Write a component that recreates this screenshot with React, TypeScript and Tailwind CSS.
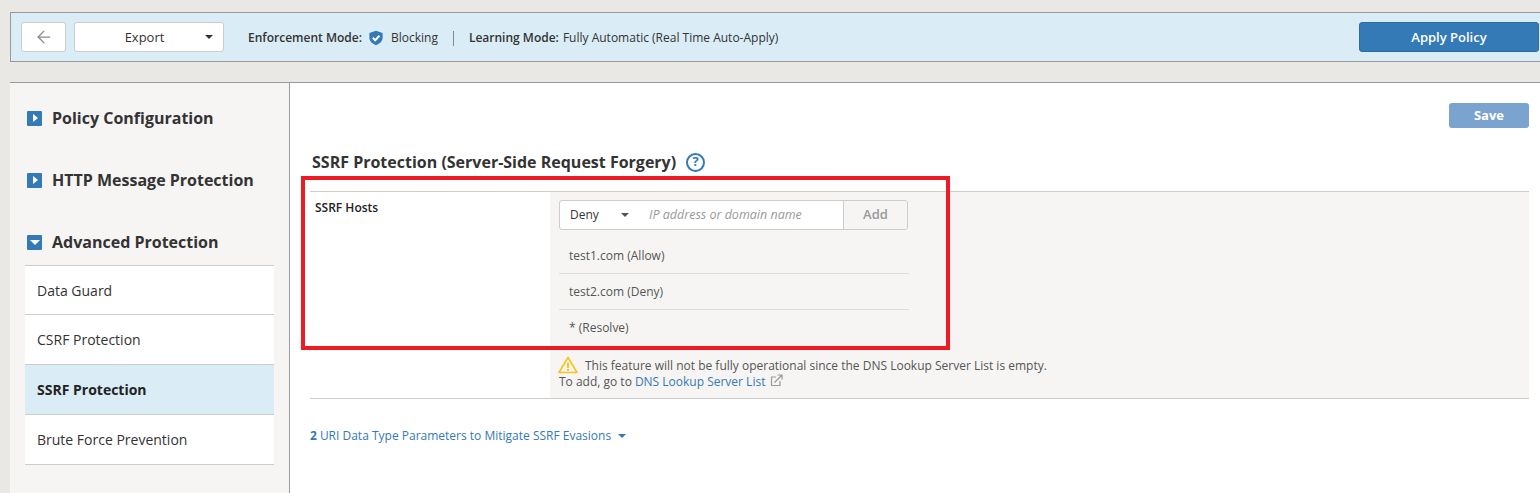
import { ArrowLeft } from "lucide-react";

function Caret({ className }: { className: string }) {
  return <span className={`inline-block w-0 h-0 border-x-[4px] border-x-transparent border-t-[4px] ${className}`} />;
}

function SectionHeader({ title, open, className }: { title: string; open?: boolean; className?: string }) {
  return (
    <div className={`flex items-center h-[20px] pl-[17px] ${className ?? ""}`}>
      <span className="w-[15px] h-[15px] bg-[#337ab7] rounded-[1px] flex items-center justify-center shrink-0">
        {open ? (
          <span className="w-0 h-0 border-x-[5px] border-x-transparent border-t-[5px] border-t-white" />
        ) : (
          <span className="w-0 h-0 border-y-[4px] border-y-transparent border-l-[5px] border-l-white ml-[1px]" />
        )}
      </span>
      <span className="ml-[10px] text-[16px] font-bold text-[#333]">{title}</span>
    </div>
  );
}

const menu = ["Data Guard", "CSRF Protection", "SSRF Protection", "Brute Force Prevention"];
const hosts = ["test1.com (Allow)", "test2.com (Deny)", "* (Resolve)"];

export default function App() {
  return (
    <div className="h-[493px] overflow-hidden bg-[#e9e8e4] pt-[12px] pl-[10px] text-[#333] font-['Open_Sans',sans-serif] relative">
      <div className="h-[50px] bg-[#daecf6] border border-r-0 border-[#999] flex items-center pl-[10px]">
        <button className="w-[45px] h-[30px] bg-white border border-[#ccc] rounded-[3px] flex items-center justify-center">
          <ArrowLeft className="w-[20px] h-[20px] text-[#8a8a8a]" strokeWidth={1.5} />
        </button>
        <button className="ml-[8px] w-[150px] h-[30px] pt-[2px] bg-white border border-[#ccc] rounded-[3px] relative text-[13px] flex items-center justify-center">
          <span className="mr-[9px]">Export</span>
          <Caret className="absolute right-[10px] top-[12px] border-t-[#333]" />
        </button>
        <span className="ml-[24px] mt-[2px] text-[12px] font-semibold">Enforcement Mode:</span>
        <svg viewBox="0 0 16 16" className="w-[16px] h-[16px] ml-[6px] mt-[2px]">
          <path d="M8 .8 14.6 3v4.6c0 3.6-2.6 6.2-6.6 7.6-4-1.4-6.6-4-6.6-7.6V3z" fill="#337ab7" />
          <path d="M4.8 7.8 7.2 10.2 11.4 5.8" fill="none" stroke="#fff" strokeWidth="2" />
        </svg>
        <span className="ml-[7px] mt-[2px] text-[12px]">Blocking</span>
        <span className="ml-[15px] mt-[2px] w-px h-[15px] bg-[#888]" />
        <span className="ml-[15px] mt-[2px] text-[12px] font-semibold">Learning Mode:</span>
        <span className="ml-[4px] mt-[2px] text-[12px]">Fully Automatic (Real Time Auto-Apply)</span>
        <button className="ml-auto mr-[1px] w-[180px] h-[30px] pt-[2px] bg-[#337ab7] border border-[#2e6da4] rounded-[3px] text-white text-[13px] font-semibold">
          Apply Policy
        </button>
      </div>

      <div className="mt-[20px] h-[411px] border-t border-[#999] flex">
        <aside className="w-[280px] shrink-0 bg-[#f6f5f3] border-r border-[#999] pt-[25px]">
          <SectionHeader title="Policy Configuration" />
          <SectionHeader title="HTTP Message Protection" className="mt-[42px]" />
          <SectionHeader title="Advanced Protection" open className="mt-[42px]" />
          <ul className="mt-[13px] ml-[15px] w-[249px] border-t border-[#ccc]">
            {menu.map((item, i) => {
              const active = item === "SSRF Protection";
              return (
                <li
                  key={item}
                  className={`${i === 0 ? "h-[49px]" : "h-[50px]"} pl-[12px] flex items-center text-[14px] border-b border-[#ccc] ${active ? "bg-[#daecf6] font-bold text-[#222]" : "bg-white"}`}
                >
                  {item}
                </li>
              );
            })}
          </ul>
        </aside>

        <main className="flex-1 bg-white px-[20px] pr-[11px] pt-[20px]">
          <div className="flex justify-end">
            <button className="w-[80px] h-[25px] bg-[#7aa3cf] rounded-[3px] text-white text-[13px] font-bold">Save</button>
          </div>
          <div className="mt-[23px] ml-[2px] flex items-center h-[22px]">
            <h2 className="text-[16px] font-bold">SSRF Protection (Server-Side Request Forgery)</h2>
            <span className="ml-[10px] w-[19px] h-[19px] rounded-full border-2 border-[#337ab7] text-[#337ab7] text-[13px] font-bold flex items-center justify-center">?</span>
          </div>

          <div className="mt-[18px] border-y border-[#ccc] flex h-[208px]">
            <div className="w-[240px] shrink-0 pl-[5px] pt-[7px] text-[12px] font-semibold text-[#222]">SSRF Hosts</div>
            <div className="flex-1 bg-[#f6f5f3] pl-[9px] pt-[8px]">
              <div className="w-[349px] h-[30px] flex bg-white border border-[#ccc] rounded-[3px] text-[12px]">
                <div className="w-[69px] pl-[10px] flex items-center relative">
                  Deny
                  <Caret className="absolute right-[0px] top-[12px] border-t-[#555]" />
                </div>
                <div className="flex-1 pl-[20px] flex items-center italic text-[12.5px] text-[#999]">IP address or domain name</div>
                <div className="w-[64px] bg-[#f6f5f3] border-l border-[#ccc] rounded-r-[3px] flex items-center justify-center font-semibold text-[13px] text-[#999]">Add</div>
              </div>
              <ul className="mt-[8px] w-[350px] text-[12px] text-[#555]">
                {hosts.map((host, i) => (
                  <li key={host} className={`h-[36px] pl-[10px] flex items-center ${i < 2 ? "border-b border-[#ddd]" : ""}`}>
                    {host}
                  </li>
                ))}
              </ul>
              <div className="mt-[10px] text-[12px] leading-[17px] text-[#555]">
                <div className="flex items-center">
                  <svg viewBox="0 0 20 18" className="w-[20px] h-[18px] -ml-px">
                    <path d="M10 1.5 19 16.5H1z" fill="none" stroke="#f5c518" strokeWidth="1.6" strokeLinejoin="round" />
                    <path d="M10 6.5v5.5M10 13v2" stroke="#f5c518" strokeWidth="2" />
                  </svg>
                  <span className="ml-[7px]">This feature will not be fully operational since the DNS Lookup Server List is empty.</span>
                </div>
                <div className="flex items-center -mt-px">
                  To add, go to<span className="ml-[3px] text-[#337ab7]">DNS Lookup Server List</span>
                  <svg viewBox="0 0 13 13" className="ml-[5px] -mt-[3px] w-[13px] h-[13px]" fill="none" stroke="#999" strokeWidth="1.2">
                    <path d="M6 3H1.5v8.5H10V7" />
                    <path d="M4.5 8.5 11.5 1.5M7.5 1h4.5v4.5" />
                  </svg>
                </div>
              </div>
            </div>
          </div>

          <div className="mt-[28px] flex items-center text-[12px] text-[#337ab7]">
            <span className="font-bold">2</span>
            <span className="ml-[3px]">URI Data Type Parameters to Mitigate SSRF Evasions</span>
            <Caret className="ml-[7px] border-t-[#337ab7]" />
          </div>
        </main>
      </div>

      <div className="absolute left-[301px] top-[176px] w-[649px] h-[174px] border-[4px] border-[#ed1c24]" />
    </div>
  );
}
